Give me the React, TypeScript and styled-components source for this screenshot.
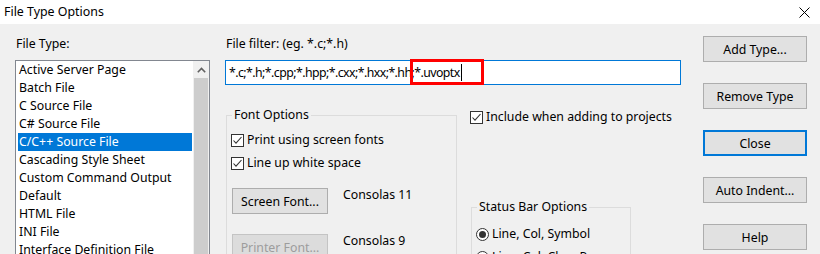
import React from "react";
import styled, { createGlobalStyle } from "styled-components";

const GlobalStyle = createGlobalStyle`
  html, body {
    margin: 0;
    padding: 0;
    background: #f0f0f0;
  }
  body {
    font-family: "Noto Sans", "Open Sans", sans-serif;
    font-size: 12.3px;
    color: #000;
  }
`;

const Window = styled.div`
  width: 820px;
  height: 254px;
  overflow: hidden;
  background: #f0f0f0;
  display: flex;
  flex-direction: column;
`;

const TitleBar = styled.div`
  height: 24px;
  flex: none;
  background: #fff;
  display: flex;
  align-items: center;
  justify-content: space-between;
  padding: 0 10px 0 4px;
`;

const TitleText = styled.span`
  font-size: 12.4px;
  line-height: 24px;
`;

const CloseIcon = styled.svg`
  width: 11px;
  height: 11px;
`;

const Body = styled.div`
  flex: 1;
  display: flex;
  padding: 10px 0 0 15px;
  border-left: 1px solid #9a9a9a;
  margin-left: -1px;
`;

const LeftColumn = styled.div`
  width: 195px;
  flex: none;
  display: flex;
  flex-direction: column;
`;

const MiddleColumn = styled.div`
  width: 456px;
  flex: none;
  margin-left: 15px;
  display: flex;
  flex-direction: column;
`;

const RightColumn = styled.div`
  width: 104px;
  flex: none;
  margin-left: 22px;
  padding-top: 2px;
  display: flex;
  flex-direction: column;
  gap: 21px;
`;

const FieldLabel = styled.div`
  line-height: 20px;
  height: 20px;
  padding-left: 1px;
`;

const ListBox = styled.div`
  margin-top: 6px;
  height: 200px;
  background: #fff;
  border: 1px solid #828790;
  display: flex;
`;

const ListItems = styled.div`
  flex: 1;
  padding: 0 1px 0 2px;
`;

const ListItem = styled.div<{ $selected?: boolean }>`
  height: 18px;
  line-height: 18px;
  padding-left: 1px;
  white-space: nowrap;
  background: ${(p) => (p.$selected ? "#0078d7" : "transparent")};
  color: ${(p) => (p.$selected ? "#fff" : "#000")};
`;

const ScrollBar = styled.div`
  width: 16px;
  flex: none;
  background: #f0f0f0;
  display: flex;
  flex-direction: column;
`;

const ScrollArrow = styled.div`
  height: 17px;
  display: flex;
  align-items: center;
  justify-content: center;
`;

const ScrollThumb = styled.div`
  flex: 1;
  margin: 0 1px;
  background: #cdcdcd;
`;

const FilterInput = styled.div`
  margin-top: 6px;
  height: 25px;
  box-sizing: border-box;
  border: 1px solid #0078d7;
  background: #fff;
  padding-left: 3px;
  line-height: 23px;
  letter-spacing: -0.55px;
  white-space: nowrap;
  display: flex;
  align-items: center;
`;

const Marked = styled.span`
  position: relative;
  display: inline-block;
`;

const RedMark = styled.span`
  position: absolute;
  left: -4px;
  top: -2px;
  width: 74px;
  height: 26px;
  box-sizing: border-box;
  border: 3px solid #ff0000;
`;

const Caret = styled.span`
  display: inline-block;
  width: 1px;
  height: 17px;
  margin-left: 1px;
  background: #000;
  vertical-align: middle;
`;

const OptionsGrid = styled.div`
  display: grid;
  grid-template-columns: 232px 161px;
  column-gap: 13px;
`;

const GroupBox = styled.div<{ $top: number }>`
  margin: ${(p) => p.$top}px 0 0 1px;
  border: 1px solid #dcdcdc;
  border-bottom: none;
  display: flex;
  flex-direction: column;
  height: 300px;
`;

const GroupTitle = styled.div`
  margin: -10px 0 0 5px;
  padding: 0 2px;
  width: fit-content;
  height: 18px;
  line-height: 18px;
  background: #f0f0f0;
`;

const GroupContent = styled.div<{ $top: number; $gap: number }>`
  display: flex;
  flex-direction: column;
  gap: ${(p) => p.$gap}px;
  padding: ${(p) => p.$top}px 0 0 4px;
`;

const CheckRow = styled.label`
  display: flex;
  align-items: center;
  gap: 3px;
  height: 18px;
  line-height: 18px;
  white-space: nowrap;
`;

const Box = styled.span`
  width: 13px;
  height: 13px;
  box-sizing: border-box;
  border: 1px solid #333;
  background: #fff;
  display: flex;
  align-items: center;
  justify-content: center;
`;

const RadioCircle = styled.span`
  width: 13px;
  height: 13px;
  box-sizing: border-box;
  border: 1px solid #333;
  border-radius: 50%;
  background: #fff;
  display: flex;
  align-items: center;
  justify-content: center;
`;

const RadioDot = styled.span`
  width: 7px;
  height: 7px;
  border-radius: 50%;
  background: #333;
`;

const FontRow = styled.div<{ $top: number }>`
  display: flex;
  align-items: flex-start;
  gap: 15px;
  margin: ${(p) => p.$top}px 0 0 5px;
`;

const FontName = styled.span`
  line-height: 14px;
`;

const Button = styled.button<{ $default?: boolean; $width?: number }>`
  width: ${(p) => (p.$width ? `${p.$width}px` : "100%")};
  height: 26px;
  box-sizing: border-box;
  padding: 0;
  font-family: inherit;
  font-size: 12.3px;
  color: #000;
  background: #e1e1e1;
  border: ${(p) => (p.$default ? "2px solid #0078d7" : "1px solid #adadad")};
  flex: none;

  &:disabled {
    background: #dcdcdc;
    border-color: #c4c4c4;
    color: #9d9d9d;
  }
`;

const RightOptions = styled.div`
  display: flex;
  flex-direction: column;
`;

const fileTypes = [
  "Active Server Page",
  "Batch File",
  "C Source File",
  "C# Source File",
  "C/C++ Source File",
  "Cascading Style Sheet",
  "Custom Command Output",
  "Default",
  "HTML File",
  "INI File",
  "Interface Definition File",
];

const Check = () => (
  <Box>
    <svg width="11" height="11" viewBox="0 0 11 11">
      <path d="M1.5 5.5 L4 8.2 L9.5 2" fill="none" stroke="#333" strokeWidth="1.1" />
    </svg>
  </Box>
);

const Radio = ({ checked }: { checked?: boolean }) => (
  <RadioCircle>{checked && <RadioDot />}</RadioCircle>
);

export default function App() {
  return (
    <Window>
      <GlobalStyle />
      <TitleBar>
        <TitleText>File Type Options</TitleText>
        <CloseIcon viewBox="0 0 11 11">
          <path d="M0.5 0.5 L10.5 10.5 M10.5 0.5 L0.5 10.5" stroke="#000" strokeWidth="1" />
        </CloseIcon>
      </TitleBar>
      <Body>
        <LeftColumn>
          <FieldLabel>File Type:</FieldLabel>
          <ListBox>
            <ListItems>
              {fileTypes.map((t) => (
                <ListItem key={t} $selected={t === "C/C++ Source File"}>
                  {t}
                </ListItem>
              ))}
            </ListItems>
            <ScrollBar>
              <ScrollArrow>
                <svg width="9" height="6" viewBox="0 0 9 6">
                  <path d="M0.8 5.2 L4.5 1.5 L8.2 5.2" fill="none" stroke="#606060" strokeWidth="1.6" />
                </svg>
              </ScrollArrow>
              <ScrollThumb />
            </ScrollBar>
          </ListBox>
        </LeftColumn>

        <MiddleColumn>
          <FieldLabel>File filter: (eg. *.c;*.h)</FieldLabel>
          <FilterInput>
            *.c;*.h;*.cpp;*.hpp;*.cxx;*.hxx;*.hh;
            <Marked>
              *.uvoptx
              <RedMark />
            </Marked>
            <Caret />
          </FilterInput>
          <OptionsGrid>
            <GroupBox $top={30}>
              <GroupTitle>Font Options</GroupTitle>
              <GroupContent $top={7} $gap={5}>
                <CheckRow>
                  <Check />
                  Print using screen fonts
                </CheckRow>
                <CheckRow>
                  <Check />
                  Line up white space
                </CheckRow>
              </GroupContent>
              <FontRow $top={16}>
                <Button $width={96}>Screen Font...</Button>
                <FontName>Consolas 11</FontName>
              </FontRow>
              <FontRow $top={20}>
                <Button $width={96} disabled>
                  Printer Font...
                </Button>
                <FontName>Consolas 9</FontName>
              </FontRow>
            </GroupBox>
            <RightOptions>
              <CheckRow style={{ marginTop: 23 }}>
                <Check />
                Include when adding to projects
              </CheckRow>
              <GroupBox $top={81}>
                <GroupTitle>Status Bar Options</GroupTitle>
                <GroupContent $top={9} $gap={5}>
                  <CheckRow>
                    <Radio checked />
                    Line, Col, Symbol
                  </CheckRow>
                  <CheckRow>
                    <Radio />
                    Line, Col, Char, Pos
                  </CheckRow>
                </GroupContent>
              </GroupBox>
            </RightOptions>
          </OptionsGrid>
        </MiddleColumn>

        <RightColumn>
          <Button>Add Type...</Button>
          <Button>Remove Type</Button>
          <Button $default>Close</Button>
          <Button>Auto Indent...</Button>
          <Button>Help</Button>
        </RightColumn>
      </Body>
    </Window>
  );
}
